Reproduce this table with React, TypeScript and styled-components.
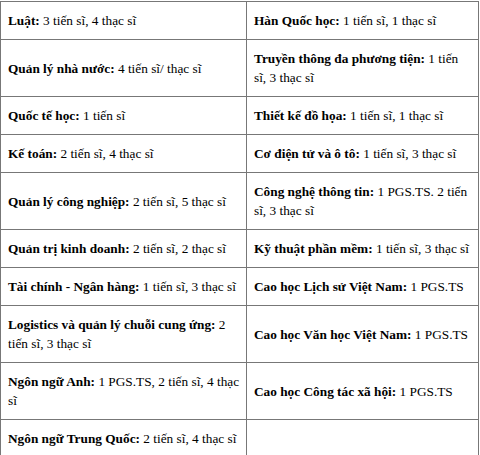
import styled, { createGlobalStyle } from "styled-components"

const GlobalStyle = createGlobalStyle`
    html, body {
        margin: 0;
        padding: 0;
        background: #ffffff;
    }
    body {
        font-family: "Liberation Serif", "Times New Roman", serif;
        color: #000000;
    }
`

const Table = styled.table`
    width: 478px;
    border-collapse: collapse;
    table-layout: fixed;
    margin-top: 1px;
    font-family: "Liberation Serif", "Times New Roman", serif;
`
const Col = styled.col<{ width: number }>`
    width: ${props => props.width}px;
`
const Row = styled.tr``
const Cell = styled.td`
    border: 1px solid #777777;
    padding: 9px 6px 9px 7px;
    font-family: "Liberation Serif", "Times New Roman", serif;
    font-size: 13.3px;
    line-height: 19px;
    color: #000000;
    vertical-align: middle;
    text-align: left;
    white-space: pre;
    overflow: visible;
`
const Label = styled.b`
    font-weight: bold;
`

type TItem = { label: string, text: string }

// \n marks where the line breaks in the original
const rows: [TItem | null, TItem | null][] = [
    [{ label: 'Luật:', text: '3 tiến sĩ, 4 thạc sĩ' }, { label: 'Hàn Quốc học:', text: '1 tiến sĩ, 1 thạc sĩ' }],
    [{ label: 'Quản lý nhà nước:', text: '4 tiến sĩ/ thạc sĩ' }, { label: 'Truyền thông đa phương tiện:', text: '1 tiến\nsĩ, 3 thạc sĩ' }],
    [{ label: 'Quốc tế học:', text: '1 tiến sĩ' }, { label: 'Thiết kế đồ họa:', text: '1 tiến sĩ, 1 thạc sĩ' }],
    [{ label: 'Kế toán:', text: '2 tiến sĩ, 4 thạc sĩ' }, { label: 'Cơ điện tử và ô tô:', text: '1 tiến sĩ, 3 thạc sĩ' }],
    [{ label: 'Quản lý công nghiệp:', text: '2 tiến sĩ, 5 thạc sĩ' }, { label: 'Công nghệ thông tin:', text: '1 PGS.TS. 2 tiến\nsĩ, 3 thạc sĩ' }],
    [{ label: 'Quản trị kinh doanh:', text: '2 tiến sĩ, 2 thạc sĩ' }, { label: 'Kỹ thuật phần mềm:', text: '1 tiến sĩ, 3 thạc sĩ' }],
    [{ label: 'Tài chính - Ngân hàng:', text: '1 tiến sĩ, 3 thạc sĩ' }, { label: 'Cao học Lịch sử Việt Nam:', text: '1 PGS.TS' }],
    [{ label: 'Logistics và quản lý chuỗi cung ứng:', text: '2\ntiến sĩ, 3 thạc sĩ' }, { label: 'Cao học Văn học Việt Nam:', text: '1 PGS.TS' }],
    [{ label: 'Ngôn ngữ Anh:', text: '1 PGS.TS, 2 tiến sĩ, 4 thạc\nsĩ' }, { label: 'Cao học Công tác xã hội:', text: '1 PGS.TS' }],
    [{ label: 'Ngôn ngữ Trung Quốc:', text: '2 tiến sĩ, 4 thạc sĩ' }, null],
]

function Item({ item }: { item: TItem | null }) {
    return (
        <Cell>
            {item && (
                <>
                    <Label>{item.label}</Label> {item.text}
                </>
            )}
        </Cell>
    )
}

export default function App() {
    return (
        <>
            <GlobalStyle />
            <Table>
                <colgroup>
                    <Col width={246} />
                    <Col width={232} />
                </colgroup>
                <tbody>
                    {
                        rows.map((row, i) => (
                            <Row key={i}>
                                <Item item={row[0]} />
                                <Item item={row[1]} />
                            </Row>
                        ))
                    }
                </tbody>
            </Table>
        </>
    )
}
